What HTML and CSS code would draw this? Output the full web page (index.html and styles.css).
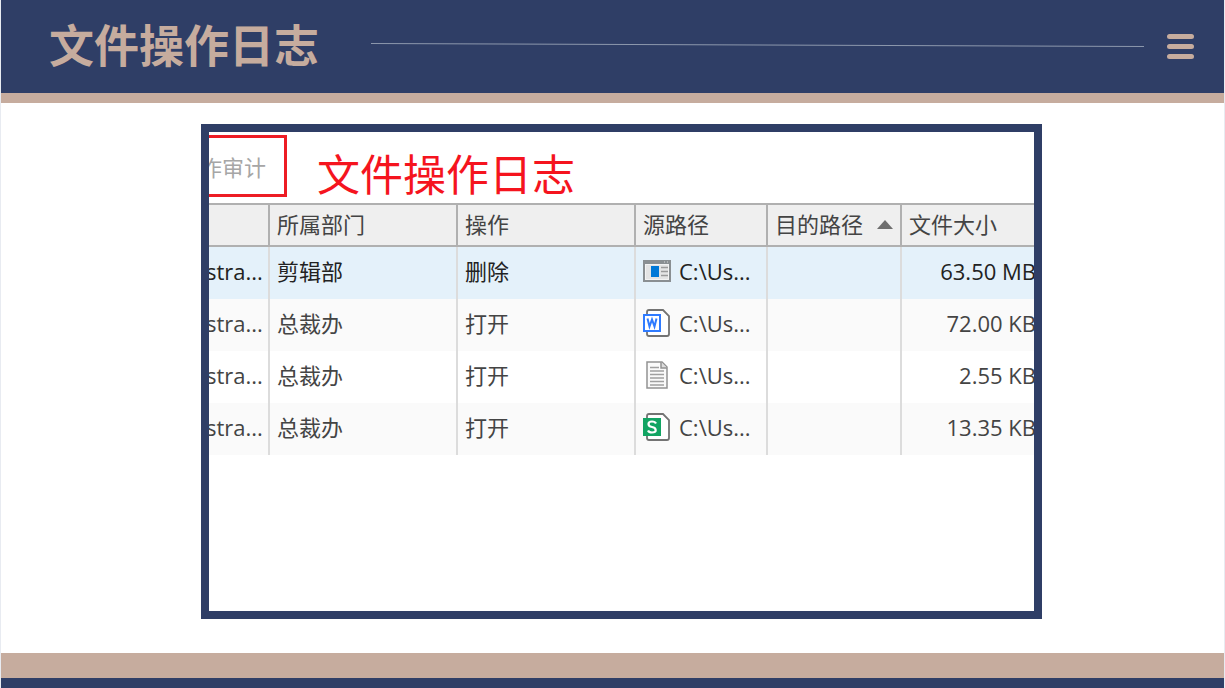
FILE: index.html
```html
<!DOCTYPE html>
<html lang="zh-CN">
<head>
    <meta charset="UTF-8">
    <meta name="viewport" content="width=device-width, initial-scale=1.0">
    <title>文件操作日志</title>
    <link rel="stylesheet" href="styles.css">
</head>
<body>
    <header class="page-header">
        <h1>文件操作日志</h1>
        <svg class="header-line" viewBox="0 0 100 4" preserveAspectRatio="none" aria-hidden="true">
            <line x1="0" y1="0.5" x2="100" y2="3.5" stroke="#8d98ad" stroke-width="1" vector-effect="non-scaling-stroke"/>
        </svg>
        <button type="button" class="menu-btn" aria-label="菜单">
            <span></span>
            <span></span>
            <span></span>
        </button>
    </header>

    <main class="content">
        <section class="log-panel">
            <div class="panel-top">
                <button type="button" class="tab">作审计</button>
                <h2>文件操作日志</h2>
            </div>
            <table class="log-table">
                <colgroup>
                    <col class="col-user">
                    <col class="col-dept">
                    <col class="col-action">
                    <col class="col-source">
                    <col class="col-target">
                    <col>
                </colgroup>
                <thead>
                    <tr>
                        <th></th>
                        <th>所属部门</th>
                        <th>操作</th>
                        <th>源路径</th>
                        <th><div class="sorted">目的路径<span class="sort-arrow"></span></div></th>
                        <th>文件大小</th>
                    </tr>
                </thead>
                <tbody>
                    <tr class="selected">
                        <td class="user">stra...</td>
                        <td>剪辑部</td>
                        <td>删除</td>
                        <td>
                            <div class="path">
                                <svg class="file-icon" viewBox="0 0 28 28">
                                    <rect x="1" y="4" width="26" height="20" fill="#f3f3f3" stroke="#8a8f92" stroke-width="2"/>
                                    <rect x="0" y="3" width="28" height="4" fill="#8a8f92"/>
                                    <path d="M21 5h1M24 5h1" stroke="#d5d8da"/>
                                    <rect x="3" y="8" width="22" height="14" fill="#e4e4e4"/>
                                    <rect x="8" y="9" width="8" height="11" fill="#0078d7"/>
                                    <path d="M18 10.500h7M18 14.500h7M18 18.500h7" stroke="#9a9a9a" stroke-width="1.500"/>
                                </svg>
                                C:\Us...
                            </div>
                        </td>
                        <td></td>
                        <td class="size">63.50 MB</td>
                    </tr>
                    <tr>
                        <td class="user">stra...</td>
                        <td>总裁办</td>
                        <td>打开</td>
                        <td>
                            <div class="path">
                                <svg class="file-icon" viewBox="0 0 28 28">
                                    <path d="M6 1h14l6 6v18q0 2-2 2H6q-2 0-2-2V3q0-2 2-2z" fill="#fff" stroke="#737373" stroke-width="1.800"/>
                                    <rect x="1" y="6" width="16" height="16" fill="#fff" stroke="#2f7bff" stroke-width="2"/>
                                    <path d="M4.500 9.500l2 8 2.500-7 2.500 7 2-8" fill="none" stroke="#2f7bff" stroke-width="2"/>
                                </svg>
                                C:\Us...
                            </div>
                        </td>
                        <td></td>
                        <td class="size">72.00 KB</td>
                    </tr>
                    <tr>
                        <td class="user">stra...</td>
                        <td>总裁办</td>
                        <td>打开</td>
                        <td>
                            <div class="path">
                                <svg class="file-icon" viewBox="0 0 28 28">
                                    <path d="M4 1h15l5 5v21H4z" fill="#fafafa" stroke="#929292" stroke-width="1.500"/>
                                    <path d="M18 1v6h6" fill="#ddd" stroke="#929292" stroke-width="1.500"/>
                                    <path d="M7 6.500h9M7 10h14M7 13.500h14M7 17h14M7 20.500h14M7 24h14" stroke="#a0a0a0" stroke-width="1.500"/>
                                </svg>
                                C:\Us...
                            </div>
                        </td>
                        <td></td>
                        <td class="size">2.55 KB</td>
                    </tr>
                    <tr>
                        <td class="user">stra...</td>
                        <td>总裁办</td>
                        <td>打开</td>
                        <td>
                            <div class="path">
                                <svg class="file-icon" viewBox="0 0 28 28">
                                    <path d="M6 1h14l6 6v18q0 2-2 2H6q-2 0-2-2V3q0-2 2-2z" fill="#fff" stroke="#737373" stroke-width="1.800"/>
                                    <rect x="0" y="5" width="18" height="18" fill="#12a463"/>
                                    <path d="M13 10.500Q12 8.500 9 8.500 5.500 8.500 5.500 11T9 14t3.700 3T9 19.500Q6 19.500 5 17.500" fill="none" stroke="#fff" stroke-width="2.200"/>
                                </svg>
                                C:\Us...
                            </div>
                        </td>
                        <td></td>
                        <td class="size">13.35 KB</td>
                    </tr>
                </tbody>
            </table>
        </section>
    </main>

    <footer class="page-footer"></footer>
</body>
</html>
```
FILE: styles.css
```css
* {
    box-sizing: border-box;
}

body {
    font-family: "Open Sans", "Noto Sans CJK SC", sans-serif;
    background-color: #fff;
    color: #444;
    margin: 0;
    border: solid #e8ebf1;
    border-width: 0 1px;
    display: flex;
    flex-direction: column;
    min-height: 100vh;
}

.page-header {
    display: flex;
    align-items: center;
    height: 103px;
    padding: 0 30px 0 48px;
    background-color: #2f3e66;
    border-bottom: 10px solid #c6ac9e;
}

h1 {
    margin: 0 0 6px;
    font-family: "Noto Sans CJK SC", sans-serif;
    font-size: 45px;
    line-height: 60px;
    color: #c6ac9e;
    white-space: nowrap;
}

.header-line {
    flex: 1;
    min-width: 0;
    height: 4px;
    margin: 0 23px 4px 52px;
}

.menu-btn {
    display: flex;
    flex-direction: column;
    gap: 5px;
    width: 27px;
    padding: 0;
    background: none;
    border: none;
    cursor: pointer;
}

.menu-btn span {
    height: 5px;
    border-radius: 3px;
    background-color: #c6ac9e;
}

.content {
    flex: 1;
    display: flex;
    padding: 21px 182px 34px 200px;
}

.log-panel {
    flex: 1;
    min-width: 0;
    border: 8px solid #2f3e66;
    overflow: hidden;
}

.panel-top {
    display: flex;
    gap: 30px;
    height: 71px;
    padding-top: 3px;
}

/* the tab runs on past the left edge of the panel */
.tab {
    height: 62px;
    margin-left: -16px;
    padding: 0 18px 0 4px;
    background: none;
    border: 3px solid #ed1c24;
    font-family: inherit;
    font-size: 22px;
    color: #a6a6a6;
    cursor: pointer;
}

h2 {
    margin: 9px 0 0;
    font-size: 43px;
    font-weight: 400;
    line-height: 62px;
    color: #f5141e;
    white-space: nowrap;
}

/* wider than the panel, so the outer columns are cut off */
.log-table {
    width: calc(100% + 24px);
    margin-left: -10px;
    table-layout: fixed;
    border-collapse: separate;
    border-spacing: 0;
    font-size: 22px;
    line-height: 30px;
    white-space: nowrap;
}

.col-user {
    width: 71px;
}

.col-dept {
    width: 188px;
}

.col-action {
    width: 178px;
}

.col-source {
    width: 132px;
}

.col-target {
    width: 134px;
}

th {
    height: 44px;
    padding: 0 7px 2px;
    background-color: #efefef;
    border: solid #b0b0b0;
    border-width: 2px 2px 2px 0;
    font-weight: 400;
    text-align: left;
}

td {
    height: 52px;
    padding: 0 7px 4px;
    border-right: 2px solid #dcdcdc;
}

tbody tr:nth-child(even) {
    background-color: #fafafa;
}

tbody .selected {
    background-color: #e4f1fa;
    color: #222;
}

.user {
    text-align: right;
}

.size {
    text-align: right;
    padding-right: 10px;
}

.sorted {
    display: flex;
    align-items: center;
    justify-content: space-between;
}

.sort-arrow {
    border: solid transparent;
    border-width: 0 8px 9px;
    border-bottom-color: #6e6e6e;
}

.path {
    display: flex;
    align-items: center;
    gap: 8px;
}

.file-icon {
    flex: none;
    width: 28px;
    height: 28px;
}

.page-footer {
    height: 35px;
    background-color: #c6ac9e;
    border-bottom: 10px solid #2f3e66;
}
```
